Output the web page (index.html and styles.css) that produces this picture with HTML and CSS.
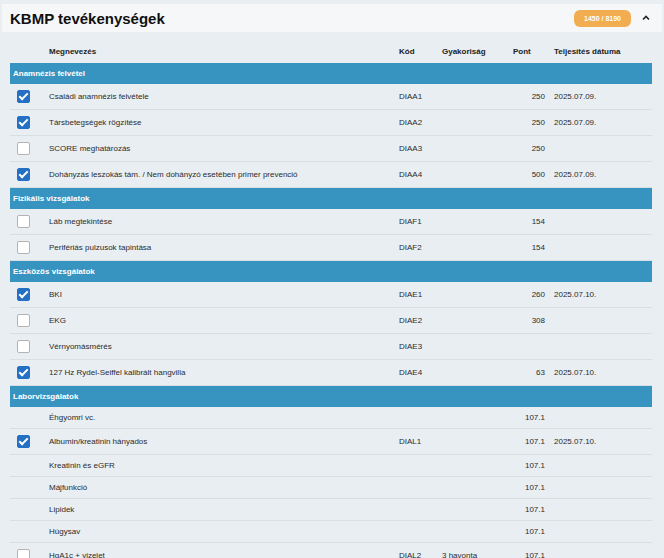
FILE: index.html
```html
<!DOCTYPE html>
<html lang="hu">
<head>
    <meta charset="UTF-8">
    <meta name="viewport" content="width=device-width, initial-scale=1.0">
    <title>KBMP tevékenységek</title>
    <link rel="stylesheet" href="styles.css">
</head>
<body>
    <div class="panel">
        <div class="panel-head">
            <h3>KBMP tevékenységek</h3>
            <span class="badge">1450 / 8190</span>
            <span class="toggle">
                <svg width="10" height="8" viewBox="0 0 10 8"><path d="M2 5.5 L5 2.5 L8 5.5" fill="none" stroke="#222" stroke-width="1.6"/></svg>
            </span>
        </div>
        <table class="act-table">
            <colgroup>
                <col class="c-check">
                <col class="c-name">
                <col class="c-code">
                <col class="c-freq">
                <col class="c-pont">
                <col class="c-date">
            </colgroup>
            <thead>
                <tr>
                    <th></th>
                    <th>Megnevezés</th>
                    <th>Kód</th>
                    <th>Gyakoriság</th>
                    <th>Pont</th>
                    <th class="date">Teljesítés dátuma</th>
                </tr>
            </thead>
            <tbody>
                <tr class="section"><td colspan="6">Anamnézis felvétel</td></tr>
                <tr>
                    <td><input type="checkbox" checked></td>
                    <td>Családi anamnézis felvétele</td>
                    <td>DIAA1</td>
                    <td></td>
                    <td class="pont">250</td>
                    <td class="date">2025.07.09.</td>
                </tr>
                <tr>
                    <td><input type="checkbox" checked></td>
                    <td>Társbetegségek rögzítése</td>
                    <td>DIAA2</td>
                    <td></td>
                    <td class="pont">250</td>
                    <td class="date">2025.07.09.</td>
                </tr>
                <tr>
                    <td><input type="checkbox"></td>
                    <td>SCORE meghatározás</td>
                    <td>DIAA3</td>
                    <td></td>
                    <td class="pont">250</td>
                    <td class="date"></td>
                </tr>
                <tr>
                    <td><input type="checkbox" checked></td>
                    <td>Dohányzás leszokás tám. / Nem dohányzó esetében primer prevenció</td>
                    <td>DIAA4</td>
                    <td></td>
                    <td class="pont">500</td>
                    <td class="date">2025.07.09.</td>
                </tr>

                <tr class="section"><td colspan="6">Fizikális vizsgálatok</td></tr>
                <tr>
                    <td><input type="checkbox"></td>
                    <td>Láb megtekintése</td>
                    <td>DIAF1</td>
                    <td></td>
                    <td class="pont">154</td>
                    <td class="date"></td>
                </tr>
                <tr>
                    <td><input type="checkbox"></td>
                    <td>Perifériás pulzusok tapintása</td>
                    <td>DIAF2</td>
                    <td></td>
                    <td class="pont">154</td>
                    <td class="date"></td>
                </tr>

                <tr class="section"><td colspan="6">Eszközös vizsgálatok</td></tr>
                <tr>
                    <td><input type="checkbox" checked></td>
                    <td>BKI</td>
                    <td>DIAE1</td>
                    <td></td>
                    <td class="pont">260</td>
                    <td class="date">2025.07.10.</td>
                </tr>
                <tr>
                    <td><input type="checkbox"></td>
                    <td>EKG</td>
                    <td>DIAE2</td>
                    <td></td>
                    <td class="pont">308</td>
                    <td class="date"></td>
                </tr>
                <tr>
                    <td><input type="checkbox"></td>
                    <td>Vérnyomásmérés</td>
                    <td>DIAE3</td>
                    <td></td>
                    <td class="pont"></td>
                    <td class="date"></td>
                </tr>
                <tr>
                    <td><input type="checkbox" checked></td>
                    <td>127 Hz Rydel-Seiffel kalibrált hangvilla</td>
                    <td>DIAE4</td>
                    <td></td>
                    <td class="pont">63</td>
                    <td class="date">2025.07.10.</td>
                </tr>

                <tr class="section"><td colspan="6">Laborvizsgálatok</td></tr>
                <tr>
                    <td></td>
                    <td>Éhgyomri vc.</td>
                    <td></td>
                    <td></td>
                    <td class="pont">107.1</td>
                    <td class="date"></td>
                </tr>
                <tr>
                    <td><input type="checkbox" checked></td>
                    <td>Albumin/kreatinin hányados</td>
                    <td>DIAL1</td>
                    <td></td>
                    <td class="pont">107.1</td>
                    <td class="date">2025.07.10.</td>
                </tr>
                <tr>
                    <td></td>
                    <td>Kreatinin és eGFR</td>
                    <td></td>
                    <td></td>
                    <td class="pont">107.1</td>
                    <td class="date"></td>
                </tr>
                <tr>
                    <td></td>
                    <td>Májfunkció</td>
                    <td></td>
                    <td></td>
                    <td class="pont">107.1</td>
                    <td class="date"></td>
                </tr>
                <tr>
                    <td></td>
                    <td>Lipidek</td>
                    <td></td>
                    <td></td>
                    <td class="pont">107.1</td>
                    <td class="date"></td>
                </tr>
                <tr>
                    <td></td>
                    <td>Húgysav</td>
                    <td></td>
                    <td></td>
                    <td class="pont">107.1</td>
                    <td class="date"></td>
                </tr>
                <tr>
                    <td><input type="checkbox"></td>
                    <td>HgA1c + vizelet</td>
                    <td>DIAL2</td>
                    <td>3 havonta</td>
                    <td class="pont">107.1</td>
                    <td class="date"></td>
                </tr>
            </tbody>
        </table>
    </div>
</body>
</html>
```

FILE: styles.css
```css
body {
    margin: 0;
    background-color: #e9eef2;
    font-family: "Liberation Sans", Arial, sans-serif;
    color: #2b2b2b;
}
.panel {
    padding: 4px 2px 0;
}
.panel-head {
    display: flex;
    align-items: center;
    height: 28px;
    padding: 0 11px 0 8px;
    background-color: #f6f7f9;
}
.panel-head h3 {
    flex: 1;
    margin: 0;
    font-size: 15px;
    font-weight: bold;
    color: #111;
}
.badge {
    height: 17px;
    line-height: 17px;
    padding: 0 10px;
    border-radius: 6px;
    background-color: #f1ad50;
    color: #fff;
    font-size: 7px;
    font-weight: bold;
}
.toggle {
    display: flex;
    margin-left: 10px;
}
.act-table {
    width: 642px;
    margin: 8px 8px 0;
    border-collapse: collapse;
    table-layout: fixed;
    font-size: 8px;
    line-height: 13px;
}
.c-check { width: 30px; }
.c-name { width: 350px; }
.c-code { width: 43px; }
.c-freq { width: 71px; }
.c-pont { width: 45px; }
.c-date { width: 103px; }
.act-table th {
    padding: 5px 9px;
    text-align: left;
    font-weight: bold;
    color: #222;
}
.act-table td {
    padding: 4px 9px;
    vertical-align: middle;
    border-bottom: 1px solid #d9dee3;
    white-space: nowrap;
}
.act-table td:first-child {
    padding: 4px 0;
}
.act-table .pont {
    text-align: right;
    padding-right: 4px;
}
.act-table .date {
    padding-left: 5px;
}
.act-table .section td {
    padding: 4px 3px;
    background-color: #3793bf;
    color: #fff;
    font-weight: bold;
    border-bottom: none;
}
.act-table input[type="checkbox"] {
    appearance: none;
    -webkit-appearance: none;
    position: relative;
    display: block;
    width: 13px;
    height: 13px;
    margin: 2px 0 2px 7px;
    border: 1px solid #b3b3b3;
    border-radius: 2px;
    background-color: #fff;
}
.act-table input[type="checkbox"]:checked {
    background-color: #2470c4;
    border-color: #2470c4;
}
.act-table input[type="checkbox"]:checked::after {
    content: "";
    position: absolute;
    left: 3px;
    top: 0px;
    width: 3px;
    height: 7px;
    border: solid #fff;
    border-width: 0 2px 2px 0;
    transform: rotate(45deg);
}
```
